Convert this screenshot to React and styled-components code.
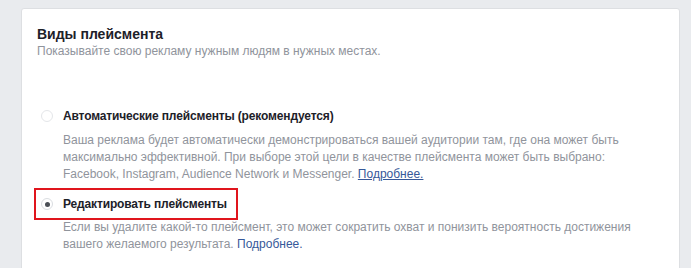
import React from 'react';
import styled, { createGlobalStyle } from 'styled-components';

const GlobalStyle = createGlobalStyle`
  html, body {
    margin: 0;
    background: #e9ebee;
  }
  body {
    font-family: "Liberation Sans", Arial, sans-serif;
    -webkit-font-smoothing: antialiased;
  }
`;

const Page = styled.div`
  padding: 8px 11px 0 21px;
  height: 268px;
  box-sizing: border-box;
  overflow: hidden;
`;

const Card = styled.section`
  background: #fff;
  border: 1px solid #dddfe2;
  border-radius: 3px;
  padding: 16px 15px 30px 15px;
  min-height: 300px;
`;

const Title = styled.h2`
  margin: 0;
  font-size: 14px;
  line-height: 18px;
  font-weight: bold;
  color: #1d2129;
`;

const Subtitle = styled.p`
  margin: 0;
  font-size: 12px;
  line-height: 16px;
  color: #90949c;
`;

const Options = styled.div`
  display: flex;
  flex-direction: column;
  gap: 13px;
  margin-top: 49px;
  padding-left: 4px;
`;

const Option = styled.div`
  display: flex;
  flex-direction: column;
`;

const OptionHead = styled.label`
  display: inline-flex;
  align-self: flex-start;
  align-items: center;
  gap: 10px;
  padding: 6px 9px 6px 5px;
  margin: -8px 0 -8px -7px;
  border: 2px solid ${p => (p.$highlight ? '#e0151d' : 'transparent')};
  font-size: 12px;
  line-height: 16px;
  font-weight: bold;
  letter-spacing: -0.15px;
  color: #1d2129;
  cursor: pointer;
`;

const Radio = styled.span`
  width: 12px;
  height: 12px;
  border-radius: 50%;
  box-sizing: border-box;
  border: 1px solid ${p => (p.$checked ? '#dadde1' : '#e4e6e9')};
  background: #fff;
  display: flex;
  align-items: center;
  justify-content: center;
  flex-shrink: 0;

  &::after {
    content: '';
    width: 5px;
    height: 5px;
    border-radius: 50%;
    background: ${p => (p.$checked ? '#4b4f56' : 'transparent')};
  }
`;

const Description = styled.p`
  margin: ${p => p.$top}px 0 0 22px;
  font-size: 12px;
  line-height: 17px;
  color: #90949c;
`;

const More = styled.a`
  color: #365899;
  text-decoration: ${p => (p.$underline ? 'underline' : 'none')};
  cursor: pointer;
`;

export default function App() {
  return (
    <>
      <GlobalStyle />
      <Page>
        <Card>
          <Title>Виды плейсмента</Title>
          <Subtitle>Показывайте свою рекламу нужным людям в нужных местах.</Subtitle>

          <Options>
            <Option>
              <OptionHead>
                <Radio />
                Автоматические плейсменты (рекомендуется)
              </OptionHead>
              <Description $top={8}>
                Ваша реклама будет автоматически демонстрироваться вашей аудитории там, где она может быть
                <br />
                максимально эффективной. При выборе этой цели в качестве плейсмента может быть выбрано:
                <br />
                Facebook, Instagram, Audience Network и Messenger. <More $underline>Подробнее.</More>
              </Description>
            </Option>

            <Option>
              <OptionHead $highlight>
                <Radio $checked />
                Редактировать плейсменты
              </OptionHead>
              <Description $top={7}>
                Если вы удалите какой-то плейсмент, это может сократить охват и понизить вероятность достижения
                <br />
                вашего желаемого результата. <More>Подробнее.</More>
              </Description>
            </Option>
          </Options>
        </Card>
      </Page>
    </>
  );
}
